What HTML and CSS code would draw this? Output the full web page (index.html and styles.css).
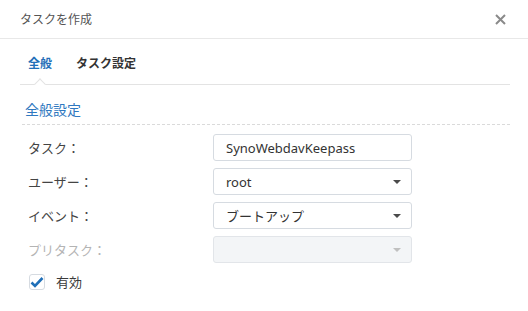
FILE: index.html
```html
<!DOCTYPE html>
<html lang="ja">
<head>
    <meta charset="UTF-8">
    <title>タスクを作成</title>
    <link rel="stylesheet" href="styles.css">
</head>
<body>
    <div class="dialog">
        <div class="dialog-header">
            <span class="dialog-title">タスクを作成</span>
            <span class="close-btn">
                <svg width="11" height="11" viewBox="0 0 11 11"><path d="M1 1 L10 10 M10 1 L1 10" stroke="#8a8a8a" stroke-width="2"/></svg>
            </span>
        </div>
        <div class="dialog-body">
            <div class="tabs">
                <span class="tab active">全般</span>
                <span class="tab">タスク設定</span>
            </div>

            <div class="section-title">全般設定</div>

            <div class="form">
                <div class="form-row">
                    <label class="form-label">タスク：</label>
                    <div class="field">SynoWebdavKeepass</div>
                </div>
                <div class="form-row">
                    <label class="form-label">ユーザー：</label>
                    <div class="field select">root<span class="arrow"></span></div>
                </div>
                <div class="form-row">
                    <label class="form-label">イベント：</label>
                    <div class="field select">ブートアップ<span class="arrow"></span></div>
                </div>
                <div class="form-row disabled">
                    <label class="form-label">プリタスク：</label>
                    <div class="field select"><span class="arrow"></span></div>
                </div>
            </div>

            <div class="check-row">
                <span class="checkbox">
                    <svg width="14" height="12" viewBox="0 0 14 12"><path d="M1.5 6.5 L5 10 L12.5 2" fill="none" stroke="#1f6fb8" stroke-width="2.6"/></svg>
                </span>
                <span class="check-label">有効</span>
            </div>
        </div>
    </div>
</body>
</html>
```

FILE: styles.css
```css
body {
    margin: 0;
    background: #ffffff;
    font-family: "Noto Sans", "Noto Sans CJK JP", sans-serif;
    font-size: 13px;
    color: #3a3a3a;
}
.dialog {
    width: 528px;
    height: 311px;
    background: #ffffff;
}
.dialog-header {
    height: 38px;
    display: flex;
    align-items: center;
    justify-content: space-between;
    padding: 0 22px 0 20px;
    border-bottom: 1px solid #e8e8e8;
}
.dialog-title {
    font-size: 12px;
    color: #555555;
}
.close-btn {
    display: flex;
    margin-top: 1px;
}
.dialog-body {
    padding: 0 18px 0 20px;
}
.tabs {
    display: flex;
    height: 46px;
    align-items: center;
    padding: 0 0 0 8px;
    border-bottom: 1px solid #e3e3e3;
    box-sizing: border-box;
}
.tab {
    position: relative;
    font-size: 12px;
    font-weight: 700;
    color: #333333;
    margin-right: 24px;
    padding-top: 2px;
}
.tab.active {
    color: #1f6fb8;
}
.tab.active::after {
    content: "";
    position: absolute;
    left: 8px;
    top: 28px;
    width: 7px;
    height: 7px;
    background: #ffffff;
    border-top: 1px solid #e3e3e3;
    border-left: 1px solid #e3e3e3;
    transform: rotate(45deg);
}
.section-title {
    margin: 0 0 0 2px;
    padding: 14px 0 5px 3px;
    font-size: 14px;
    color: #2f78c0;
    border-bottom: 1px dashed #dadada;
}
.form {
    display: flex;
    flex-direction: column;
    gap: 7px;
    margin-top: 9px;
}
.form-row {
    display: flex;
    align-items: center;
}
.form-label {
    width: 185px;
    padding-left: 8px;
    color: #444444;
}
.field {
    position: relative;
    width: 199px;
    height: 27px;
    box-sizing: border-box;
    border: 1px solid #d6dbe1;
    border-radius: 3px;
    padding: 0 12px;
    display: flex;
    align-items: center;
    color: #333333;
}
.arrow {
    position: absolute;
    right: 10px;
    top: 11px;
    width: 0;
    height: 0;
    border-left: 4px solid transparent;
    border-right: 4px solid transparent;
    border-top: 4px solid #4a4a4a;
}
.disabled .form-label {
    color: #b4b4b4;
}
.disabled .field {
    background: #f3f5f7;
    border-color: #e2e5e9;
}
.disabled .arrow {
    border-top-color: #c0c0c0;
}
.check-row {
    display: flex;
    align-items: center;
    gap: 11px;
    margin: 9px 0 0 9px;
}
.checkbox {
    width: 16px;
    height: 16px;
    box-sizing: border-box;
    border: 1px solid #d6dbe1;
    border-radius: 3px;
    display: flex;
    align-items: center;
    justify-content: center;
}
.check-label {
    color: #3a3a3a;
}
```
